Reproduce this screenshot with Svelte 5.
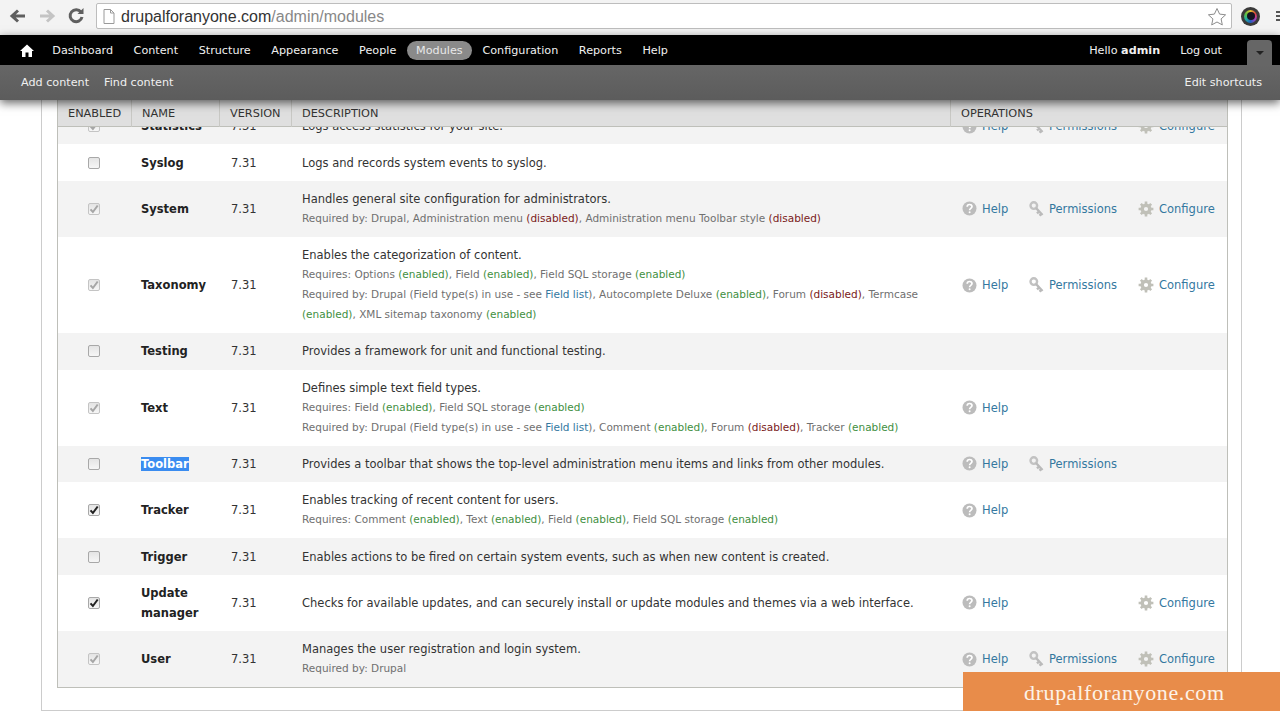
<script>
  const mainNav = ["Dashboard", "Content", "Structure", "Appearance", "People", "Modules", "Configuration", "Reports", "Help"]

  const modules = [
    { name: "Statistics", box: "locked", lines: ["Logs access statistics for your site."], ops: ["help", "perm", "conf"] },
    { name: "Syslog", box: "off", lines: ["Logs and records system events to syslog."], ops: [] },
    { name: "System", box: "locked", lines: [
      "Handles general site configuration for administrators.",
      "Required by: Drupal, Administration menu (disabled), Administration menu Toolbar style (disabled)"
    ], ops: ["help", "perm", "conf"] },
    { name: "Taxonomy", box: "locked", lines: [
      "Enables the categorization of content.",
      "Requires: Options (enabled), Field (enabled), Field SQL storage (enabled)",
      "Required by: Drupal (Field type(s) in use - see Field list), Autocomplete Deluxe (enabled), Forum (disabled), Termcase",
      "(enabled), XML sitemap taxonomy (enabled)"
    ], ops: ["help", "perm", "conf"] },
    { name: "Testing", box: "off", lines: ["Provides a framework for unit and functional testing."], ops: [] },
    { name: "Text", box: "locked", lines: [
      "Defines simple text field types.",
      "Requires: Field (enabled), Field SQL storage (enabled)",
      "Required by: Drupal (Field type(s) in use - see Field list), Comment (enabled), Forum (disabled), Tracker (enabled)"
    ], ops: ["help"] },
    { name: "Toolbar", box: "off", selected: true, lines: ["Provides a toolbar that shows the top-level administration menu items and links from other modules."], ops: ["help", "perm"] },
    { name: "Tracker", box: "on", lines: [
      "Enables tracking of recent content for users.",
      "Requires: Comment (enabled), Text (enabled), Field (enabled), Field SQL storage (enabled)"
    ], ops: ["help"] },
    { name: "Trigger", box: "off", lines: ["Enables actions to be fired on certain system events, such as when new content is created."], ops: [] },
    { name: "Update manager", box: "on", lines: ["Checks for available updates, and can securely install or update modules and themes via a web interface."], ops: ["help", "conf"] },
    { name: "User", box: "locked", lines: ["Manages the user registration and login system.", "Required by: Drupal"], ops: ["help", "perm", "conf"] }
  ]

  const opLabels = { help: "Help", perm: "Permissions", conf: "Configure" }

  function tokens(line) {
    return line.split(/(\(enabled\)|\(disabled\)|Field list)/).filter(Boolean)
  }

  function tokenClass(t) {
    if (t === "(enabled)") return "enabled"
    if (t === "(disabled)") return "disabled"
    if (t === "Field list") return "link"
    return ""
  }
</script>

{#snippet opIcon(kind)}
  {#if kind === "help"}
    <svg width="15" height="15" viewBox="0 0 15 15">
      <circle cx="7.5" cy="7.5" r="7" fill="#bcbcbc" />
      <path d="M5.2 5.8c0-3 4.8-3 4.8-.2 0 1.800-2.400 1.800-2.400 3.600" fill="none" stroke="#fff" stroke-width="1.700" />
      <circle cx="7.600" cy="11.300" r="1" fill="#fff" />
    </svg>
  {:else if kind === "perm"}
    <svg width="15" height="16" viewBox="0 0 15 16">
      <circle cx="4.800" cy="4.600" r="3.300" fill="none" stroke="#c2c2c2" stroke-width="2.400" />
      <path d="M7 7l6.500 7M10 10.500l-2 1.800M12.200 13l-1.700 1.600" fill="none" stroke="#bababa" stroke-width="2.400" />
    </svg>
  {:else}
    <svg width="16" height="16" viewBox="0 0 16 16">
      <circle cx="8" cy="8" r="3.800" fill="none" stroke="#c0c0b8" stroke-width="3.400" />
      <path d="M8 .6v3M8 12.400v3M.6 8h3M12.400 8h3M2.800 2.800l2.100 2.100M11.100 11.100l2.100 2.100M2.800 13.200l2.100-2.100M11.100 4.900l2.100-2.100" stroke="#c0c0b8" stroke-width="2.600" />
    </svg>
  {/if}
{/snippet}

{#snippet moduleRow(mod)}
  <div class="row">
    <div class="cell-box">
      <span class="box {mod.box}">
        {#if mod.box !== "off"}
          <svg width="10" height="10" viewBox="0 0 10 10"><path d="M1.500 5.300l2.400 2.700L8.700 1.500" fill="none" stroke="currentColor" stroke-width="2" /></svg>
        {/if}
      </span>
    </div>
    <div class="cell-name"><strong class:selected={mod.selected}>{mod.name}</strong></div>
    <div class="cell-version">7.31</div>
    <div class="cell-desc">
      {#each mod.lines as line, i}
        <div class={i === 0 ? "lead" : "sub"}>
          {#each tokens(line) as t}<span class={tokenClass(t)}>{t}</span>{/each}
        </div>
      {/each}
    </div>
    <div class="cell-ops">
      {#each ["help", "perm", "conf"] as kind}
        <span class="op {kind}">
          {#if mod.ops.includes(kind)}
            {@render opIcon(kind)}
            <a href="#{kind}">{opLabels[kind]}</a>
          {/if}
        </span>
      {/each}
    </div>
  </div>
{/snippet}

<div class="screen">
  <header class="chrome">
    <svg class="nav-icon" width="18" height="16" viewBox="0 0 18 16"><path d="M16 8H4M9 2.500L3 8l6 5.500" fill="none" stroke="#5f5f5f" stroke-width="3" /></svg>
    <svg class="nav-icon" width="18" height="16" viewBox="0 0 18 16"><path d="M2 8h12M9 2.500L15 8l-6 5.500" fill="none" stroke="#c4c4c4" stroke-width="3" /></svg>
    <svg class="nav-icon" width="18" height="18" viewBox="0 0 18 18"><path d="M14 5.200A6 6 0 1 0 15 10" fill="none" stroke="#5f5f5f" stroke-width="3" /><path d="M10.500 7h6V1z" fill="#5f5f5f" /></svg>
    <div class="omnibox">
      <svg width="12" height="15" viewBox="0 0 12 15"><path d="M1 .5h6.500L11 4v10.500H1z M7.500 .5V4H11" fill="#fff" stroke="#9a9a9a" /></svg>
      <span class="url">drupalforanyone.com<span class="path">/admin/modules</span></span>
      <svg class="star" width="20" height="19" viewBox="0 0 20 19"><path d="M10 1.500l2.600 5.600 6 .7-4.500 4.100 1.200 6L10 15l-5.300 2.900 1.200-6L1.400 7.800l6-.7z" fill="#fff" stroke="#8c8c8c" /></svg>
    </div>
    <span class="avatar"><span class="avatar-ring"><span class="avatar-core"></span></span></span>
    <span class="menu"><i></i><i></i><i></i></span>
  </header>

  <div class="admin">
    <nav class="menu-bar">
      <svg class="home" width="14" height="13" viewBox="0 0 14 13"><path d="M7 .5L0 7h2v6h3.500V8.500h3V13H12V7h2z" fill="#fff" /></svg>
      <ul>
        {#each mainNav as item}
          <li class:active={item === "Modules"}>{item}</li>
        {/each}
      </ul>
      <div class="user">
        <span>Hello <strong>admin</strong></span>
        <span>Log out</span>
        <span class="toggle"><i></i></span>
      </div>
    </nav>
    <nav class="shortcuts">
      <span>Add content</span>
      <span>Find content</span>
      <span class="edit">Edit shortcuts</span>
    </nav>
  </div>

  <main class="page">
    <div class="frame">
      <div class="table">
        <div class="row head">
          <div>ENABLED</div>
          <div>NAME</div>
          <div>VERSION</div>
          <div>DESCRIPTION</div>
          <div>OPERATIONS</div>
        </div>
        <div class="clip">
          <div class="rows">
            {#each modules as mod}
              {@render moduleRow(mod)}
            {/each}
          </div>
        </div>
      </div>
    </div>
  </main>

  <div class="watermark">drupalforanyone.com</div>
</div>

<style>
  :global(body) {
    margin: 0;
    background: #fff;
  }

  .screen {
    position: relative;
    display: flex;
    flex-direction: column;
    width: 1280px;
    height: 720px;
    overflow: hidden;
    font-family: "DejaVu Sans", sans-serif;
    font-size: 11.500px;
    color: #333;
  }

  /* browser bar */
  .chrome {
    display: flex;
    align-items: center;
    flex: none;
    height: 35px;
    padding: 0 0 3px 9px;
    box-sizing: border-box;
    background: #f3f3f3;
  }

  .nav-icon {
    flex: none;
    margin-right: 11px;
  }

  .omnibox {
    display: flex;
    align-items: center;
    flex: none;
    width: 1136px;
    height: 26px;
    padding: 0 4px 0 6px;
    box-sizing: border-box;
    background: #fff;
    border: 1px solid #bdbdbd;
    border-radius: 2px;
  }

  .url {
    flex: 1;
    margin-left: 6px;
    padding-top: 1px;
    font-family: "Liberation Sans", sans-serif;
    font-size: 16px;
    color: #333;
  }

  .path {
    color: #888;
  }

  .avatar {
    flex: none;
    display: grid;
    place-items: center;
    width: 19px;
    height: 19px;
    margin-left: 9px;
    border-radius: 50%;
    background: #3a3a3a;
  }

  .avatar-ring {
    display: grid;
    place-items: center;
    width: 13px;
    height: 13px;
    border-radius: 50%;
    background: conic-gradient(#e0c030, #e04040, #a040c0, #2060c0, #20b0a0, #60c040, #e0c030);
  }

  .avatar-core {
    width: 8px;
    height: 8px;
    border-radius: 50%;
    background: #141420;
  }

  .menu {
    display: flex;
    flex-direction: column;
    gap: 2px;
    flex: none;
    margin-left: 16px;
  }

  .menu i {
    display: block;
    width: 12px;
    height: 2px;
    background: #555;
  }

  /* admin toolbar */
  .admin {
    position: relative;
    z-index: 2;
    flex: none;
    font-size: 11.200px;
    box-shadow: 0 3px 9px rgba(0, 0, 0, 0.6);
  }

  .menu-bar {
    display: flex;
    align-items: center;
    height: 30px;
    padding-left: 20px;
    background: #000;
    color: #f0f0f0;
  }

  .home {
    flex: none;
    margin-right: 8px;
  }

  ul {
    display: flex;
    align-items: center;
    margin: 0;
    padding: 0;
    list-style: none;
  }

  li {
    padding: 0 10.300px;
  }

  li.active {
    padding: 3px 9.500px;
    border-radius: 10px;
    background: #8a8a8a;
    color: #e8e8e8;
  }

  .user {
    display: flex;
    align-items: center;
    gap: 20px;
    margin-left: auto;
    align-self: stretch;
  }

  .user strong {
    font-weight: 700;
  }

  .toggle {
    display: grid;
    place-items: center;
    align-self: flex-end;
    width: 25px;
    height: 25px;
    margin: 0 8px 0 5px;
    border-radius: 4px 4px 0 0;
    background: #666;
  }

  .toggle i {
    width: 0;
    height: 0;
    border: 4px solid transparent;
    border-top-color: #222;
    border-bottom: 0;
  }

  .shortcuts {
    display: flex;
    align-items: center;
    gap: 15px;
    height: 35px;
    padding: 0 18px 1px 21px;
    box-sizing: border-box;
    background: linear-gradient(#666, #5c5c5c);
    color: #f0f0f0;
  }

  .edit {
    margin-left: auto;
  }

  /* page */
  .page {
    flex: 1;
    min-height: 0;
    padding-left: 41px;
    overflow: hidden;
  }

  .frame {
    width: 1201px;
    height: 611px;
    padding: 0 13px 0 15px;
    box-sizing: border-box;
    border: 1px solid #ccc;
    border-top: 0;
  }

  .table {
    height: 587px;
    display: flex;
    flex-direction: column;
    border: 1px solid #bebfb9;
    border-top: 0;
  }

  .row {
    display: grid;
    grid-template-columns: 74px 88px 72px 659px 1fr;
    align-items: center;
  }

  .rows .row:nth-child(odd) {
    background: #f3f3f3;
  }

  .head {
    flex: none;
    align-items: stretch;
    height: 27px;
    box-sizing: border-box;
    background: #dfdfdf;
    border-bottom: 1px solid #bebfb9;
    font-size: 11.300px;
    line-height: 28px;
  }

  .head > div {
    padding-left: 10px;
    border-right: 1px solid #c8c8c4;
  }

  .head > div:last-child {
    border-right: 0;
  }

  .clip {
    flex: 1;
    min-height: 0;
    overflow: hidden;
  }

  .rows {
    margin-top: -18.900px;
  }

  .cell-box {
    display: grid;
    place-items: center;
    padding-right: 2px;
  }

  .box {
    display: grid;
    place-items: center;
    width: 12px;
    height: 12px;
    box-sizing: border-box;
    border: 1px solid #a8a8a8;
    border-radius: 2px;
    background: linear-gradient(#e4e4e4, #f6f6f6);
    color: #222;
  }

  .box.locked {
    color: #a6a6a6;
    border-color: #c4c4c4;
  }

  .cell-name {
    padding: 8.150px 0 8.150px 9px;
    line-height: 20px;
    color: #222;
  }

  .cell-name strong {
    font-weight: 700;
  }

  .selected {
    background: #3a8cf0;
    color: #fff;
  }

  .cell-version {
    padding-left: 11px;
  }

  .cell-desc {
    padding: 8.150px 0 8.150px 10px;
    line-height: 20px;
    min-width: 0;
  }

  .lead {
    color: #333;
  }

  .lead:not(:last-child) {
    margin-bottom: -1px;
  }

  .sub {
    font-size: 10.500px;
    color: #707070;
    white-space: nowrap;
  }

  .sub:last-child {
    padding-bottom: 1px;
  }

  .enabled {
    color: #3f8f3f;
  }

  .disabled {
    color: #7a1a1a;
  }

  .link,
  a {
    color: #34789f;
    text-decoration: none;
  }

  .cell-ops {
    display: grid;
    grid-template-columns: 67px 109px 1fr;
    padding-left: 11px;
  }

  .op {
    display: flex;
    align-items: center;
    gap: 5px;
    height: 18px;
  }

  .watermark {
    position: absolute;
    right: 0;
    top: 672px;
    box-sizing: border-box;
    width: 317px;
    height: 39px;
    padding: 1px 0 0 61px;
    background: #e88c4a;
    color: #fdf3e8;
    font-family: "Liberation Serif", serif;
    font-size: 22px;
    line-height: 39px;
    letter-spacing: 0.630px;
  }
</style>
